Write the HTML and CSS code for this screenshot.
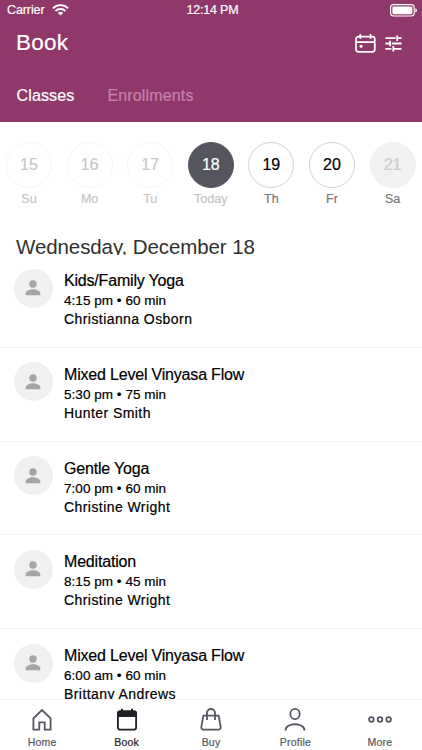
FILE: index.html
```html
<!DOCTYPE html>
<html lang="en">
<head>
<meta charset="utf-8">
<title>Book</title>
<link rel="stylesheet" href="styles.css">
</head>
<body>
<svg class="defs" width="0" height="0"><symbol id="person" viewBox="0 0 16 16"><circle cx="8" cy="4" r="3.7"/><path d="M.7 15.2v-1.6C.7 10.9 4.6 9.3 8 9.3s7.3 1.6 7.3 4.3v1.6z"/></symbol></svg>
<div class="app">
  <header class="header">
    <div class="status">
      <div class="carrier"><span>Carrier</span>
        <svg width="17" height="12" viewBox="0 0 17 12" fill="none" stroke="#fff" stroke-width="1.9"><path d="M.9 4.3a10.8 10.8 0 0 1 15.2 0M3.5 7a7.1 7.1 0 0 1 10 0"/><path d="M8.5 11.6 5.9 9a3.7 3.7 0 0 1 5.2 0z" fill="#fff" stroke="none"/></svg>
      </div>
      <span class="clock">12:14 PM</span>
      <svg class="battery" width="28" height="13" viewBox="0 0 28 13"><rect x=".6" y=".6" width="23.6" height="11.4" rx="3" fill="none" stroke="#fff" stroke-width="1.1"/><rect x="2.4" y="2.4" width="20" height="7.8" rx="1.4" fill="#fff"/><path d="M25.4 4.2c2 .6 2 3.6 0 4.3z" fill="#fff"/></svg>
    </div>
    <div class="titlebar">
      <h1>Book</h1>
      <div class="actions">
        <svg width="21" height="19" viewBox="0 0 21 19" fill="none" stroke="#fff" stroke-width="1.7"><rect x="1" y="2.7" width="18.8" height="15.2" rx="2.6"/><path d="M1 8.2h18.8M5.3 0v4.7M15.5 0v4.7"/><circle cx="6" cy="12.2" r="1.5" fill="#fff" stroke="none"/></svg>
        <svg width="17" height="17" viewBox="0 0 17 17" fill="none" stroke="#fff" stroke-width="1.8"><path d="M.4 3.2h10.2M12.2 3.2h4.4M12.2.5v5.4M.4 8.5h4.2M6.8 8.5h9.8M5.1 5.8v5.4M.4 13.8h6M8.3 13.8h8.3M8.3 11.1v5.4"/></svg>
      </div>
    </div>
    <nav class="tabs"><span class="active">Classes</span><span>Enrollments</span></nav>
  </header>
  <section class="days">
    <div class="day past"><b>15</b><span>Su</span></div>
    <div class="day past"><b>16</b><span>Mo</span></div>
    <div class="day past"><b>17</b><span>Tu</span></div>
    <div class="day today"><b>18</b><span>Today</span></div>
    <div class="day"><b>19</b><span>Th</span></div>
    <div class="day"><b>20</b><span>Fr</span></div>
    <div class="day empty"><b>21</b><span>Sa</span></div>
  </section>
  <main class="list">
    <h2>Wednesday, December 18</h2>
    <article class="class"><div class="avatar"><svg><use href="#person"/></svg></div><div><h3>Kids/Family Yoga</h3><p class="time">4:15 pm • 60 min</p><p>Christianna Osborn</p></div></article>
    <article class="class"><div class="avatar"><svg><use href="#person"/></svg></div><div><h3>Mixed Level Vinyasa Flow</h3><p class="time">5:30 pm • 75 min</p><p>Hunter Smith</p></div></article>
    <article class="class"><div class="avatar"><svg><use href="#person"/></svg></div><div><h3>Gentle Yoga</h3><p class="time">7:00 pm • 60 min</p><p>Christine Wright</p></div></article>
    <article class="class"><div class="avatar"><svg><use href="#person"/></svg></div><div><h3>Meditation</h3><p class="time">8:15 pm • 45 min</p><p>Christine Wright</p></div></article>
    <article class="class"><div class="avatar"><svg><use href="#person"/></svg></div><div><h3>Mixed Level Vinyasa Flow</h3><p class="time">6:00 am • 60 min</p><p>Brittany Andrews</p></div></article>
  </main>
  <nav class="bottom">
    <div class="item"><svg viewBox="0 0 24 24"><path d="M3.4 10.3 12 2l8.6 8.3v11.3h-5.9v-7.2H9.3v7.2H3.4z"/></svg><span>Home</span></div>
    <div class="item selected"><svg viewBox="0 0 24 24"><rect x="2.9" y="3.4" width="18.2" height="18.2" rx="2"/><path d="M2 9V5.4a3 3 0 0 1 3-3h1V.8h2v1.6h8V.8h2v1.6h1a3 3 0 0 1 3 3V9z" fill="#202127" stroke="none"/></svg><span>Book</span></div>
    <div class="item"><svg viewBox="0 0 24 24"><path d="M4.4 7.6h15.2l2.1 11.5a2.2 2.2 0 0 1-2.2 2.6h-15a2.2 2.2 0 0 1-2.2-2.6zM8 12V5a4 4 0 0 1 8 0v7"/></svg><span>Buy</span></div>
    <div class="item"><svg viewBox="0 0 24 24"><ellipse cx="12" cy="6" rx="4.7" ry="5.1"/><path d="M2.5 22.4c0-8.2 19-8.2 19 0"/></svg><span>Profile</span></div>
    <div class="item"><svg viewBox="0 0 24 24"><circle cx="3.4" cy="11.5" r="2.3"/><circle cx="12" cy="11.5" r="2.3"/><circle cx="20.6" cy="11.5" r="2.3"/></svg><span>More</span></div>
  </nav>
</div>
</body>
</html>
```
FILE: styles.css
```css
* { box-sizing: border-box; margin: 0; padding: 0; }
body { font-family: "Liberation Sans", Arial, sans-serif; background: #fff; color: #000; -webkit-text-stroke: .2px currentColor; }
svg { display: block; }
.defs { display: none; }
.app { width: 422px; height: 750px; display: flex; flex-direction: column; overflow: hidden; }
.header { height: 122px; flex: none; background: #91386a; color: #fff; }
.status { height: 20px; display: grid; grid-template-columns: 1fr auto 1fr; align-items: center; padding: 0 4px 0 7px; font-size: 12.5px; }
.carrier { display: flex; gap: 7px; align-items: center; letter-spacing: -.1px; }
.clock { letter-spacing: -.2px; }
.battery { justify-self: end; }
.titlebar { height: 46px; display: flex; justify-content: space-between; align-items: center; padding: 0 20px 0 16px; }
h1 { font-size: 22.5px; font-weight: 400; line-height: 28px; letter-spacing: .2px; }
.actions { display: flex; gap: 9px; align-items: center; }
.tabs { display: flex; gap: 33px; padding: 20px 16.5px 0; font-size: 16px; line-height: 20px; letter-spacing: .15px; color: #c881aa; }
.tabs .active { color: #fff; }
.days { flex: none; height: 103px; display: flex; padding: 20px 0 0 6px; gap: 14.6px; }
.day { width: 46px; flex: none; display: flex; flex-direction: column; align-items: center; }
.day b { width: 46px; height: 46px; border: 1px solid #d3d3d3; border-radius: 50%; display: grid; place-items: center; font-size: 16px; font-weight: 400; }
.day span { margin-top: 3px; font-size: 12.5px; line-height: 16px; letter-spacing: 0; color: #777; }
.day.past b { border-color: #f5f5f5; color: #c8c8c8; }
.day.past span, .day.today span { color: #c5c5c5; }
.day.today b { background: #54555f; border-color: #54555f; color: #fff; }
.day.empty b { background: #f1f1f1; border-color: #f1f1f1; color: #ccc; }
.list { flex: 1; min-height: 0; overflow: hidden; }
h2 { height: 30px; overflow: hidden; padding: 9px 0 0 16px; font-size: 20.5px; line-height: 25px; font-weight: 400; letter-spacing: -.09px; color: #303030; white-space: nowrap; -webkit-text-stroke-width: 0; }
.class { height: 93.75px; display: flex; gap: 11.5px; padding: 14.5px 0 0 13.5px; border-bottom: 1px solid #f1f1f1; }
h2 + .class { margin-top: -1px; }
.avatar { width: 39px; height: 39px; border-radius: 50%; background: #f0f0f0; display: grid; place-items: center; }
.avatar svg { width: 16px; height: 16px; fill: #a5a5a5; }
h3 { font-size: 16px; font-weight: 400; line-height: 22px; margin-top: 1.5px; letter-spacing: -.19px; }
.class p { font-size: 14px; line-height: 19px; letter-spacing: .43px; }
.class .time { font-size: 13.5px; letter-spacing: .04px; line-height: 18px; }
.bottom { flex: none; height: 51px; display: flex; border-top: 1px solid #f3f3f3; background: #fff; }
.item { flex: 1; display: flex; flex-direction: column; align-items: center; padding-top: 8px; font-size: 10.5px; letter-spacing: .2px; color: #555761; }
.item svg { width: 24px; height: 24px; fill: none; stroke: currentColor; stroke-width: 1.8; overflow: visible; }
.item span { line-height: 14px; margin-top: 3px; }
.selected { color: #202127; }
```
